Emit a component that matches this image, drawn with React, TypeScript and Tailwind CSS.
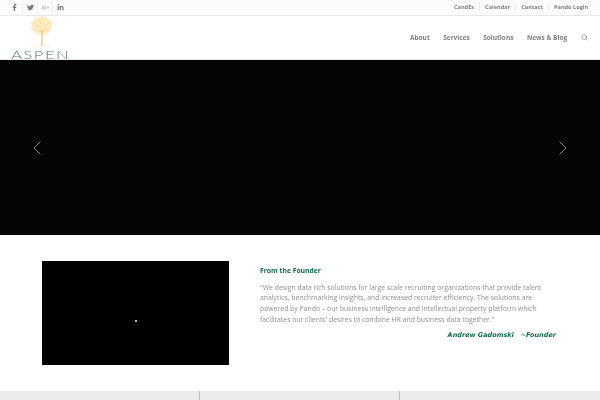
import { Search, ChevronLeft, ChevronRight } from "lucide-react";
import { FaFacebookF, FaTwitter, FaGooglePlusG, FaLinkedinIn } from "react-icons/fa";

const socials = [
  { Icon: FaFacebookF, key: "fb", tone: "text-[#777]" },
  { Icon: FaTwitter, key: "tw", tone: "text-[#777]" },
  { Icon: FaGooglePlusG, key: "gp", tone: "text-[#aaa]" },
  { Icon: FaLinkedinIn, key: "li", tone: "text-[#777]" },
];

const topLinks = ["CandEs", "Calendar", "Contact", "Pando Login"];
const navLinks = ["About", "Services", "Solutions", "News & Blog"];

function TreeLogo() {
  const dots = [];
  for (let y = 0; y < 9; y++) {
    for (let x = 0; x < 10; x++) {
      const dx = x - 4.5;
      const dy = y - 4;
      if (dx * dx * 0.9 + dy * dy * 1.2 < 21 && (x * 3 + y * 5) % 4 !== 0) {
        dots.push(<circle key={`${x}-${y}`} cx={1 + x * 2.1} cy={1.5 + y * 2} r={0.95} fill="#f8e2a8" />);
      }
    }
  }
  return (
    <svg width="22" height="31" viewBox="0 0 22 31" className="block ml-[2px]">
      <ellipse cx="11" cy="10" rx="10" ry="9.5" fill="#fcf1d4" />
      {dots}
      <path d="M11 14 L11 30" stroke="#eccb72" strokeWidth="1.4" />
      <path d="M11 18 L8 14 M11 17 L14 13" stroke="#f2d98f" strokeWidth="0.7" />
      <path d="M3 30.5 L19 30.5" stroke="#f6e7bd" strokeWidth="0.5" />
    </svg>
  );
}

export default function App() {
  return (
    <div className="w-[600px] h-[400px] overflow-hidden bg-white font-['Open_Sans',sans-serif] flex flex-col">
      {/* top bar */}
      <div className="h-[16px] shrink-0 bg-[#fbfbfb] border-b border-[#e8e8e8] flex items-center justify-between pl-[7px] pr-[12px]">
        <div className="flex items-center h-full">
          {socials.map(({ Icon, key, tone }, i) => (
            <div
              key={key}
              className={`w-[15px] h-full flex items-center justify-center text-[7px] ${tone} ${i > 0 ? "border-l border-[#eeeeee]" : ""}`}
            >
              <Icon />
            </div>
          ))}
        </div>
        <div className="flex items-center text-[5.6px] font-bold text-[#808080] will-change-transform">
          {topLinks.map((t, i) => (
            <span key={t} className={i > 0 ? "ml-[5px] pl-[5px] border-l border-[#eeeeee]" : ""}>
              {t}
            </span>
          ))}
        </div>
      </div>

      {/* header */}
      <div className="h-[44px] shrink-0 border-b border-[#e8e8e8] flex items-center justify-between pl-[13px] pr-[12px]">
        <div className="flex flex-col items-center w-[56px] h-full">
          <TreeLogo />
          <span className="mt-[3px] font-['Lato',sans-serif] font-light text-[11px] leading-[9px] tracking-[1px] text-[#4f7a66] scale-x-[1.5] will-change-transform">
            ASPEN
          </span>
        </div>
        <div className="flex items-center gap-[13.5px] text-[6.5px] font-bold text-[#808080] will-change-transform">
          {navLinks.map((t) => (
            <span key={t}>{t}</span>
          ))}
          <Search size={7} strokeWidth={2} className="text-[#777]" />
        </div>
      </div>

      {/* hero */}
      <div className="h-[175px] shrink-0 bg-[#050505] flex items-center justify-between px-[25px] text-[#888]">
        <ChevronLeft size={24} strokeWidth={1} />
        <ChevronRight size={24} strokeWidth={1} />
      </div>

      {/* founder section */}
      <div className="flex-1 flex pl-[42px] pt-[26px]">
        <div className="w-[187px] h-[104px] bg-black flex items-center justify-center shrink-0 pt-[16px]">
          <div className="w-[2px] h-[2px] bg-white rounded-full" />
        </div>
        <div className="ml-[31px] w-[298px] pt-[5px] will-change-transform">
          <h3 className="text-[6.8px] font-bold text-[#0f6b4f] leading-[10px]">From the Founder</h3>
          <p className="mt-[6.5px] text-[6.86px] leading-[10.7px] text-[#8f8f8f]">
            "We design data rich solutions for large scale recruiting organizations that provide talent analytics,
            benchmarking insights, and increased recruiter efficiency. The solutions are powered by Pando – our
            business intelligence and intellectual property platform which facilitates our clients' desires to
            combine HR and business data together."
          </p>
          <p className="mt-[6px] text-right pr-[2px] font-['DejaVu_Sans',sans-serif] text-[6.5px] italic font-bold text-[#0f6b4f]">
            Andrew Gadomski &nbsp; ~Founder
          </p>
        </div>
      </div>

      {/* bottom strip */}
      <div className="h-[9px] shrink-0 bg-[#ebebeb] grid grid-cols-3">
        <div className="border-r border-[#bdbdbd]" />
        <div className="border-r border-[#bdbdbd]" />
        <div />
      </div>
    </div>
  );
}
